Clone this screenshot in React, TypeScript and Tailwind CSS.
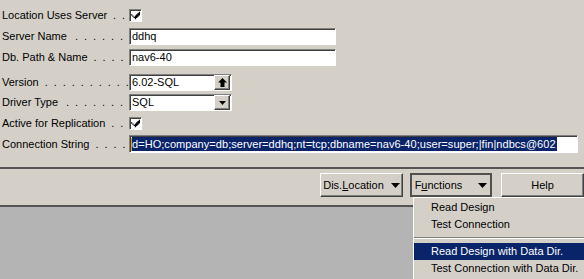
import type { ReactNode } from 'react'

const sunken = 'border border-t-[#808080] border-l-[#808080] border-r-white border-b-white shadow-[inset_1px_1px_0_#404040]'
const raised = 'border border-t-white border-l-white border-r-[#404040] border-b-[#404040] shadow-[inset_-1px_-1px_0_#808080]'

function Dots({ n }: { n: number }) {
  return (
    <div className="flex flex-1 justify-end">
      {Array.from({ length: n }).map((_, i) => (
        <span key={i} className="w-[9px] text-right">
          .
        </span>
      ))}
    </div>
  )
}

function Row({ label, dots, mt, children }: { label: string; dots: number; mt: string; children: ReactNode }) {
  return (
    <div className={`flex items-center ${mt}`}>
      <div className="flex w-[129px] shrink-0 items-center pl-[2px] pr-[6px]">
        <span className="whitespace-nowrap">{label}</span>
        <Dots n={dots} />
      </div>
      {children}
    </div>
  )
}

function Check() {
  return (
    <div className={`flex h-[13px] w-[13px] items-center justify-center bg-white ${sunken}`}>
      <svg width="9" height="9" viewBox="0 0 7 7">
        <path d="M0 2.5h1v1h1v1h1v-1h1v-1h1v-1h1v-1h1v3h-1v1h-1v1h-1v1h-1v-1h-1v-1h-1v-1h-1z" fill="#000" />
      </svg>
    </div>
  )
}

function TextBox({ value, w, children }: { value: string; w: string; children?: ReactNode }) {
  return (
    <div className={`flex h-[17px] ${w} items-center bg-white ${sunken}`}>
      <span className="flex-1 pl-[2px]">{value}</span>
      {children}
    </div>
  )
}

function BoxButton({ children }: { children: ReactNode }) {
  return (
    <div className={`mr-[1px] flex h-[15px] w-[16px] items-center justify-center bg-[#d4d0c8] ${raised}`}>
      {children}
    </div>
  )
}

function Arrow() {
  return (
    <svg width="9" height="5" viewBox="0 0 9 5">
      <path d="M0 0h9L4.5 5z" fill="#000" />
    </svg>
  )
}

export default function App() {
  return (
    <div
      className="relative h-[279px] w-[584px] overflow-hidden bg-[#d4d0c8] text-[11px] leading-[13px] text-black"
      style={{ fontFamily: '"Liberation Sans", Arial, sans-serif' }}
    >
      <div className="flex flex-col">
        <Row label="Location Uses Server" dots={2} mt="mt-[9px]">
          <Check />
        </Row>
        <Row label="Server Name" dots={6} mt="mt-[6px]">
          <TextBox value="ddhq" w="w-[207px]" />
        </Row>
        <Row label="Db. Path & Name" dots={4} mt="mt-[4px]">
          <TextBox value="nav6-40" w="w-[207px]" />
        </Row>
        <Row label="Version" dots={10} mt="mt-[8px]">
          <TextBox value="6.02-SQL" w="w-[103px]">
            <BoxButton>
              <svg width="9" height="9" viewBox="0 0 9 9">
                <path d="M4.5 0L9 4.5H6.5V9h-4V4.5H0z" fill="#000" />
              </svg>
            </BoxButton>
          </TextBox>
        </Row>
        <Row label="Driver Type" dots={7} mt="mt-[3px]">
          <TextBox value="SQL" w="w-[103px]">
            <BoxButton>
              <svg width="7" height="4" viewBox="0 0 7 4">
                <path d="M0 0h7L3.5 4z" fill="#000" />
              </svg>
            </BoxButton>
          </TextBox>
        </Row>
        <Row label="Active for Replication" dots={2} mt="mt-[6px]">
          <Check />
        </Row>
        <Row label="Connection String" dots={4} mt="mt-[5px]">
          <div className={`flex h-[18px] w-[449px] items-center bg-white ${sunken}`}>
            <div className="ml-[1px] h-[13px] w-[1px] bg-[#e0a020]" />
            <span className="whitespace-nowrap bg-[#0a246a] pr-[1px] leading-[14px] tracking-[0.05px] text-white">
              d=HO;company=db;server=ddhq;nt=tcp;dbname=nav6-40;user=super;|fin|ndbcs@602
            </span>
          </div>
        </Row>
      </div>

      <div className="mt-[14px] h-[2px] bg-[#555555]" />

      <div className="mt-[4px] flex h-[24px] gap-[7px] pl-[320px]">
        <div className={`flex w-[84px] items-center justify-center gap-[7px] ${raised}`}>
          <span>
            Dis.<span className="underline">L</span>ocation
          </span>
          <Arrow />
        </div>
        <div className="flex w-[83px] items-center justify-center gap-[16px] border-2 border-[#505050]">
          <span>
            F<span className="underline">u</span>nctions
          </span>
          <Arrow />
        </div>
        <div className={`ml-[2px] flex w-[83px] shrink-0 items-center justify-center ${raised}`}>
          <span>Help</span>
        </div>
      </div>

      <div className="mt-[8px] h-[2px] bg-[#555555]" />
      <div className="h-[80px] bg-[#b4b4b4]" />

      <div className="absolute left-[413px] top-[197px] flex h-[90px] w-[180px] flex-col border-l border-t border-white bg-[#d4d0c8] pt-[1px]">
        <div className="flex h-[17px] items-center pl-[17px]">Read Design</div>
        <div className="flex h-[17px] items-center pl-[17px]">Test Connection</div>
        <div className="my-[4px] flex flex-col">
          <div className="h-[1px] bg-[#808080]" />
          <div className="h-[1px] bg-white" />
        </div>
        <div className="flex h-[17px] items-center bg-[#0a246a] pl-[17px] text-white">Read Design with Data Dir.</div>
        <div className="flex h-[17px] items-center pl-[17px]">Test Connection with Data Dir.</div>
        <div className="mt-[3px] flex flex-col">
          <div className="h-[1px] bg-[#808080]" />
          <div className="h-[1px] bg-white" />
        </div>
      </div>
    </div>
  )
}
